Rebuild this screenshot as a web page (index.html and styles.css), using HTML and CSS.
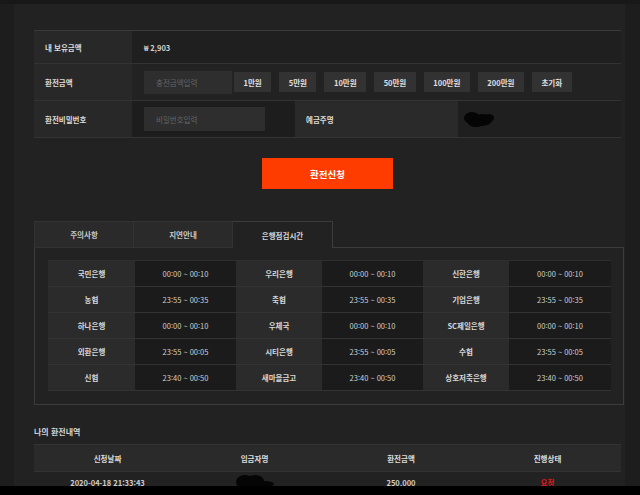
FILE: index.html
```html
<!DOCTYPE html>
<html lang="ko">
<head>
<meta charset="utf-8">
<title>환전신청</title>
<link rel="stylesheet" href="styles.css">
</head>
<body>
<div class="topbar"></div>
<div class="main">
  <div class="form">
    <div class="row r1">
      <div class="label">내 보유금액</div>
      <div class="value">₩ 2,903</div>
    </div>
    <div class="row r2">
      <div class="label">환전금액</div>
      <div class="value amounts">
        <input class="inp inp-amount" type="text" placeholder="충전금액입력">
        <button class="amt first">1만원</button>
        <button class="amt">5만원</button>
        <button class="amt">10만원</button>
        <button class="amt">50만원</button>
        <button class="amt">100만원</button>
        <button class="amt">200만원</button>
        <button class="amt">초기화</button>
      </div>
    </div>
    <div class="row r3">
      <div class="label">환전비밀번호</div>
      <div class="value v-pass"><input class="inp inp-pass" type="password" placeholder="비밀번호입력"></div>
      <div class="label label2">예금주명</div>
      <div class="value v-name">
        <svg class="scribble" width="34" height="18" viewBox="0 0 34 18"><g fill="#050505"><ellipse cx="10" cy="8" rx="8" ry="6"/><ellipse cx="20" cy="10" rx="10" ry="6"/><ellipse cx="14" cy="13" rx="8" ry="4"/><ellipse cx="27" cy="8" rx="5" ry="4"/></g></svg>
      </div>
    </div>
  </div>

  <button class="submit">환전신청</button>

  <div class="tabs">
    <div class="tab">주의사항</div>
    <div class="tab">지연안내</div>
    <div class="tab active">은행점검시간</div>
    <div class="tab-rest"></div>
  </div>
  <div class="tabbox">
    <div class="banks">
      <div class="b">국민은행</div><div class="t">00:00 ~ 00:10</div><div class="b">우리은행</div><div class="t">00:00 ~ 00:10</div><div class="b">신한은행</div><div class="t">00:00 ~ 00:10</div>
      <div class="b">농협</div><div class="t">23:55 ~ 00:35</div><div class="b">축협</div><div class="t">23:55 ~ 00:35</div><div class="b">기업은행</div><div class="t">23:55 ~ 00:35</div>
      <div class="b">하나은행</div><div class="t">00:00 ~ 00:10</div><div class="b">우체국</div><div class="t">00:00 ~ 00:10</div><div class="b">SC제일은행</div><div class="t">00:00 ~ 00:10</div>
      <div class="b">외환은행</div><div class="t">23:55 ~ 00:05</div><div class="b">시티은행</div><div class="t">23:55 ~ 00:05</div><div class="b">수협</div><div class="t">23:55 ~ 00:05</div>
      <div class="b">신협</div><div class="t">23:40 ~ 00:50</div><div class="b">새마을금고</div><div class="t">23:40 ~ 00:50</div><div class="b">상호저축은행</div><div class="t">23:40 ~ 00:50</div>
    </div>
  </div>

  <h2 class="title">나의 환전내역</h2>
  <div class="history">
    <div class="hrow head">
      <div>신청날짜</div><div>입금자명</div><div>환전금액</div><div>진행상태</div>
    </div>
    <div class="hrow data">
      <div>2020-04-18 21:33:43</div>
      <div><svg class="scribble2" width="40" height="18" viewBox="0 0 40 18"><g fill="#050505"><ellipse cx="10" cy="9" rx="9" ry="7"/><ellipse cx="20" cy="8" rx="9" ry="6"/><ellipse cx="30" cy="11" rx="9" ry="3"/></g></svg></div>
      <div>250,000</div>
      <div class="req">요청</div>
    </div>
  </div>
</div>
<div class="bottombar"></div>
</body>
</html>
```

FILE: styles.css
```css
html, body {
  margin: 0;
  padding: 0;
}
body {
  background: #1d1d1d;
  font-family: "Noto Sans CJK KR", "Noto Sans", sans-serif;
  color: #d8d8d8;
  font-size: 7.5px;
  width: 640px;
  height: 495px;
  overflow: hidden;
}
.topbar {
  height: 4px;
  background: #181818;
}
.main {
  margin-left: 14px;
  width: 611px;
  height: 491px;
  background: #222222;
  padding: 26px 0 0 20px;
  box-sizing: border-box;
}
.form {
  width: 587px;
  border-top: 1px solid #3a3a3a;
}
.row {
  display: flex;
  border-bottom: 1px solid #333;
}
.r1 { height: 32px; }
.r2 { height: 36px; }
.r3 { height: 36px; }
.label {
  width: 98px;
  box-sizing: border-box;
  padding-left: 11px;
  background: #282828;
  display: flex;
  align-items: center;
  font-weight: bold;
  color: #dcdcdc;
  flex: none;
}
.value {
  flex: 1;
  background: #1f1f1f;
  display: flex;
  align-items: center;
  padding-left: 12px;
  font-weight: bold;
  color: #d0d0d0;
}
.r2 .value { background: #222; }
.inp {
  border: none;
  outline: none;
  background: #2e2e2e;
  color: #ccc;
  font-family: inherit;
  font-size: 7.5px;
  padding: 0 0 0 12px;
  box-sizing: border-box;
}
.inp::placeholder { color: #646464; }
.inp-amount { width: 88px; height: 23px; }
.amt {
  border: none;
  background: #323232;
  color: #e0e0e0;
  font-family: inherit;
  font-size: 7.5px;
  font-weight: bold;
  height: 20px;
  padding: 0 9.5px;
  margin-left: 8px;
}
.amt.first { margin-left: 2px; }
.v-pass {
  flex: none;
  width: 163px;
  box-sizing: border-box;
  background: #1d1d1d;
}
.inp-pass { width: 121px; height: 24px; }
.label2 {
  width: 163px;
  background: #2a2a2a;
  font-weight: bold;
}
.v-name { padding-left: 4px; }
.submit {
  display: block;
  margin: 20px 0 0 228px;
  width: 131px;
  height: 31px;
  border: none;
  background: #ff3c00;
  color: #fff;
  font-family: inherit;
  font-size: 9.5px;
  font-weight: bold;
}
.tabs {
  display: flex;
  margin-top: 32px;
  width: 590px;
  height: 27px;
}
.tab {
  box-sizing: border-box;
  width: 99px;
  height: 27px;
  background: #2a2a2a;
  border: 1px solid #333;
  border-right: none;
  display: flex;
  align-items: center;
  justify-content: center;
  color: #c8c8c8;
  font-weight: bold;
}
.tab:nth-child(2) { width: 100px; border-right: 1px solid #333; }
.tab.active {
  width: 100px;
  background: #222;
  border: 1px solid #3c3c3c;
  border-left: none;
  border-bottom: none;
  color: #d6d6d6;
}
.tab-rest {
  flex: 1;
  border-bottom: 1px solid #3c3c3c;
}
.tabbox {
  width: 590px;
  box-sizing: border-box;
  border: 1px solid #3c3c3c;
  border-top: none;
  padding: 12px 12px 13px 13px;
}
.banks {
  display: grid;
  grid-template-columns: 87px 101px 86px 101px 86px 102px;
  grid-auto-rows: 26px;
  border-top: 1px solid #2e2e2e;
}
.banks > div {
  display: flex;
  align-items: center;
  justify-content: center;
  border-bottom: 1px solid #333;
  box-sizing: border-box;
}
.banks .b {
  background: #2b2b2b;
  font-weight: bold;
  color: #d8d8d8;
}
.banks .t {
  background: #1b1b1b;
  color: #cfcfcf;
}
.title {
  margin: 20px 0 0 0;
  height: 19px;
  font-size: 8px;
  font-weight: bold;
  color: #d4d4d4;
  line-height: 14px;
}
.history { width: 587px; }
.hrow {
  display: grid;
  grid-template-columns: 147px 147px 146px 147px;
  height: 26px;
}
.hrow > div {
  display: flex;
  align-items: center;
  justify-content: center;
}
.head {
  background: #2a2a2a;
  border-top: 1px solid #333;
  border-bottom: 1px solid #333;
  font-weight: bold;
  color: #dcdcdc;
}
.data { color: #cfcfcf; font-weight: bold; }
.data > div { padding-bottom: 6px; }
.req { color: #e01818; }
.bottombar {
  position: fixed;
  left: 0;
  right: 0;
  bottom: 0;
  height: 9px;
  background: #000;
}
```
